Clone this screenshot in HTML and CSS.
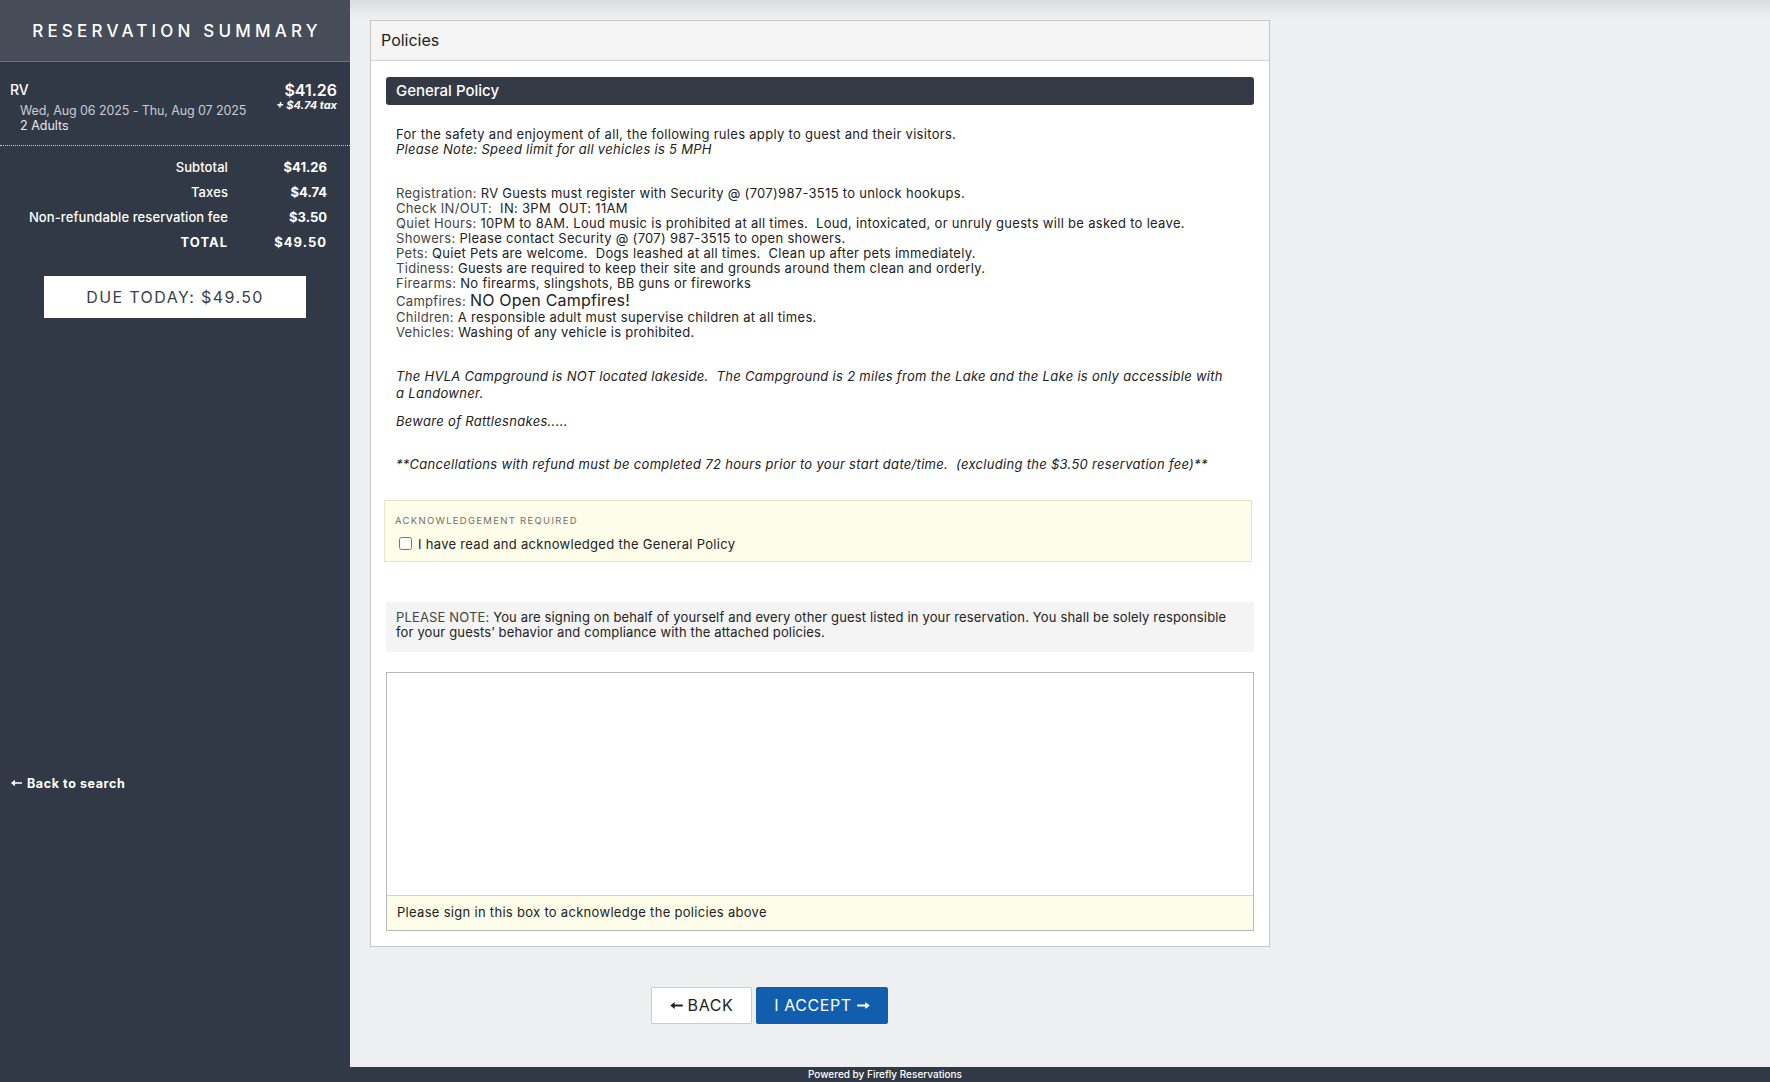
FILE: index.html
```html
<!DOCTYPE html>
<html lang="en">
<head>
<meta charset="utf-8">
<title>Policies</title>
<link rel="stylesheet" href="styles.css">
</head>
<body>
<div class="layout">
  <aside class="sidebar">
    <div class="sb-head">RESERVATION SUMMARY</div>
    <div class="item">
      <div class="item-left">
        <div class="item-name">RV</div>
        <div class="item-dates">Wed, Aug 06 2025 - Thu, Aug 07 2025</div>
        <div class="item-guests">2 Adults</div>
      </div>
      <div class="item-right">
        <div class="item-price">$41.26</div>
        <div class="item-tax">+ $4.74 tax</div>
      </div>
    </div>
    <div class="totals">
      <div class="t-label">Subtotal</div><div class="t-value">$41.26</div>
      <div class="t-label">Taxes</div><div class="t-value">$4.74</div>
      <div class="t-label">Non-refundable reservation fee</div><div class="t-value">$3.50</div>
      <div class="t-label t-total">TOTAL</div><div class="t-value t-total">$49.50</div>
    </div>
    <div class="due">DUE TODAY: $49.50</div>
    <a class="back-search" href="#"><svg class="arr" viewBox="0 0 14 10" width="11" height="8"><path d="M0 5 L5 1 V4 H14 V6 H5 V9 Z" fill="currentColor"/></svg>Back to search</a>
  </aside>
  <main class="main">
    <section class="card">
      <div class="card-head">Policies</div>
      <div class="card-body">
        <div class="policy-bar">General Policy</div>
        <div class="policy-text">
          <div>For the safety and enjoyment of all, the following rules apply to guest and their visitors.</div>
          <div class="it">Please Note: Speed limit for all vehicles is 5 MPH</div>
          <div class="rules">
            <div><span class="k">Registration:</span> RV Guests must register with Security @ (707)987-3515 to unlock hookups.</div>
            <div><span class="k">Check IN/OUT:</span>&nbsp; IN: 3PM&nbsp; OUT: 11AM</div>
            <div><span class="k">Quiet Hours:</span> 10PM to 8AM. Loud music is prohibited at all times.&nbsp; Loud, intoxicated, or unruly guests will be asked to leave.</div>
            <div><span class="k">Showers:</span> Please contact Security @ (707) 987-3515 to open showers.</div>
            <div><span class="k">Pets:</span> Quiet Pets are welcome.&nbsp; Dogs leashed at all times.&nbsp; Clean up after pets immediately.</div>
            <div><span class="k">Tidiness:</span> Guests are required to keep their site and grounds around them clean and orderly.</div>
            <div><span class="k">Firearms:</span> No firearms, slingshots, BB guns or fireworks</div>
            <div class="camp"><span class="k">Campfires:</span> <span class="big">NO Open Campfires!</span></div>
            <div><span class="k">Children:</span> A responsible adult must supervise children at all times.</div>
            <div><span class="k">Vehicles:</span> Washing of any vehicle is prohibited.</div>
          </div>
          <p class="it p-lake">The HVLA Campground is NOT located lakeside.&nbsp; The Campground is 2 miles from the Lake and the Lake is only accessible with a Landowner.</p>
          <p class="it p-snake">Beware of Rattlesnakes.....</p>
          <p class="it p-cancel">**Cancellations with refund must be completed 72 hours prior to your start date/time.&nbsp; (excluding the $3.50 reservation fee)**</p>
        </div>
        <div class="ack">
          <div class="ack-label">ACKNOWLEDGEMENT REQUIRED</div>
          <div class="ack-row"><input type="checkbox" class="ack-check" id="ack1"><label for="ack1">I have read and acknowledged the General Policy</label></div>
        </div>
        <div class="note"><span class="k">PLEASE NOTE:</span> You are signing on behalf of yourself and every other guest listed in your reservation. You shall be solely responsible for your guests’ behavior and compliance with the attached policies.</div>
        <div class="sig">
          <div class="sig-pad"></div>
          <div class="sig-foot">Please sign in this box to acknowledge the policies above</div>
        </div>
      </div>
    </section>
    <div class="actions">
      <button class="btn btn-back"><svg class="arr" viewBox="0 0 14 10" width="13" height="9"><path d="M0 5 L5 1 V4 H14 V6 H5 V9 Z" fill="currentColor"/></svg>BACK</button>
      <button class="btn btn-accept">I ACCEPT<svg class="arr arr-r" viewBox="0 0 14 10" width="13" height="9"><path d="M14 5 L9 1 V4 H0 V6 H9 V9 Z" fill="currentColor"/></svg></button>
    </div>
  </main>
</div>
<footer class="footer">Powered by Firefly Reservations</footer>
</body>
</html>
```
FILE: styles.css
```css
* { box-sizing: border-box; }
html, body { margin: 0; padding: 0; }
body {
  font-family: Inter, "Liberation Sans", sans-serif;
  background: #eeeff1;
  color: #222;
  width: 1770px;
  height: 1082px;
  overflow: hidden;
}
.layout { display: flex; height: 1067px; }

/* Sidebar */
.sidebar {
  width: 350px;
  flex: none;
  background: #323946;
  color: #fff;
  display: flex;
  flex-direction: column;
}
.sb-head {
  height: 62px;
  background: #464d59;
  border-bottom: 1px solid #6c727c;
  display: flex;
  align-items: center;
  justify-content: center;
  font-size: 17px;
  font-weight: 500;
  letter-spacing: 4.2px;
  padding-left: 4px;
}
.item {
  display: flex;
  justify-content: space-between;
  padding: 19px 13px 12px 10px;
  border-bottom: 1px dotted #c9ccd1;
}
.item-name { font-size: 14px; line-height: 18px; font-weight: 500; }
.item-dates { font-size: 12.5px; line-height: 15px; margin: 4px 0 0 10px; color: #c9ccd2; letter-spacing: -0.1px; }
.item-guests { font-size: 12.5px; line-height: 15px; margin-left: 10px; color: #e6e8eb; }
.item-right { text-align: right; }
.item-price { font-size: 16px; line-height: 18px; font-weight: 600; }
.item-tax { font-size: 11px; line-height: 13px; font-weight: 700; font-style: italic; }

.totals {
  display: grid;
  grid-template-columns: 228px 99px;
  grid-auto-rows: 25px;
  align-items: center;
  margin-top: 8.5px;
  font-size: 13px;
}
.t-label { text-align: right; font-weight: 500; letter-spacing: 0.1px; }
.t-value { text-align: right; font-weight: 700; }
.t-total { letter-spacing: 1px; font-weight: 700; }

.due {
  margin: 21px 0 0 44px;
  width: 262px;
  height: 42px;
  background: #fff;
  color: #3a404b;
  font-size: 16px;
  letter-spacing: 1.4px;
  display: flex;
  align-items: center;
  justify-content: center;
}
.back-search {
  margin: 458px 0 0 11px;
  color: #fff;
  text-decoration: none;
  font-size: 12.5px;
  font-weight: 700;
  letter-spacing: 0.6px;
  display: flex;
  align-items: center;
  gap: 5px;
}

/* Main */
.main {
  flex: 1;
  padding: 20px 0 0 20px;
  background: linear-gradient(to bottom, #dcdddf 0, #eeeff1 18px);
}
.card {
  width: 900px;
  background: #fff;
  border: 1px solid #c6c6c6;
}
.card-head {
  height: 40px;
  background: #f5f5f5;
  border-bottom: 1px solid #d3d3d3;
  padding-left: 10px;
  font-size: 16px;
  line-height: 39px;
  color: #222;
}
.card-body { padding: 16px 15px 15px 15px; }
.policy-bar {
  height: 28px;
  background: #333a46;
  color: #fff;
  border-radius: 3px;
  padding-left: 10px;
  font-size: 15px;
  font-weight: 500;
  line-height: 28px;
}
.policy-text {
  padding: 21.5px 10px 0 10px;
  font-size: 13px;
  letter-spacing: 0.3px;
  line-height: 15px;
  color: #222;
}
.it { font-style: italic; }
.k { color: #444; }
.rules { margin-top: 29.5px; }
.rules .camp { line-height: 18px; }
.big { font-size: 16px; letter-spacing: 0.2px; }
.policy-text p { margin: 0; line-height: 17px; }
.p-lake { margin-top: 28px !important; max-width: 830px; }
.p-snake { margin-top: 11px !important; }
.p-cancel { margin-top: 26px !important; }

.ack {
  margin: 26.5px 2px 0 -2px;
  background: #fdfdea;
  border: 1px solid #e5e5c6;
  padding: 14px 10px 9px 10px;
}
.ack-label {
  font-size: 9.5px;
  line-height: 12px;
  letter-spacing: 1.3px;
  color: #6f6f6f;
}
.ack-row {
  display: flex;
  align-items: center;
  gap: 6px;
  margin-top: 9px;
  font-size: 13px;
  letter-spacing: 0.3px;
  line-height: 16px;
  color: #222;
}
.ack-check { margin: 0 0 0 4px; width: 13px; height: 13px; flex: none; }

.note {
  margin-top: 40px;
  background: #f4f4f4;
  padding: 8px 10px 12px 10px;
  font-size: 13px;
  letter-spacing: 0.15px;
  line-height: 15px;
  color: #222;
}
.sig {
  margin-top: 20px;
  border: 1px solid #b8b8b8;
}
.sig-pad { height: 222px; background: #fff; }
.sig-foot {
  height: 35px;
  border-top: 1px solid #cfcfcf;
  background: #fdfdea;
  padding-left: 10px;
  font-size: 13px;
  letter-spacing: 0.3px;
  line-height: 33px;
  color: #222;
}

.actions {
  display: flex;
  gap: 4px;
  margin-top: 40px;
  padding-left: 281px;
}
.btn {
  height: 37px;
  font-family: inherit;
  font-size: 16px;
  letter-spacing: 0.6px;
  display: flex;
  align-items: center;
  justify-content: center;
  gap: 5px;
  cursor: pointer;
}
.btn-back {
  width: 101px;
  background: #fff;
  border: 1px solid #cbcbcb;
  color: #222;
  border-radius: 1px;
}
.btn-accept {
  width: 132px;
  background: #125eae;
  border: 1px solid #125eae;
  color: #fff;
  border-radius: 2px;
}

.footer {
  height: 15px;
  background: #323946;
  color: #fff;
  font-size: 10px;
  font-weight: 500;
  line-height: 15px;
  text-align: center;
}
```
